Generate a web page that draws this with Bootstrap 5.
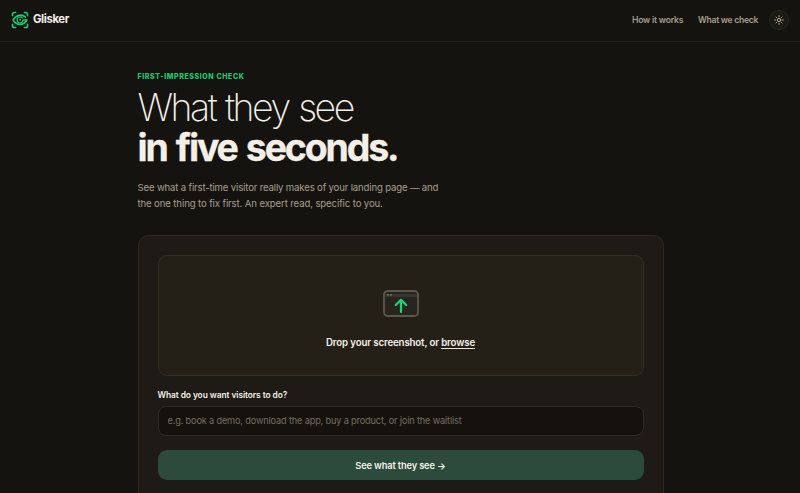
<!DOCTYPE html>
<html lang="en">
<head>
<meta charset="utf-8">
<meta name="viewport" content="width=device-width, initial-scale=1">
<title>Glisker</title>
<link href="https://cdn.jsdelivr.net/npm/bootstrap@5.3.0/dist/css/bootstrap.min.css" rel="stylesheet">
<style>
body{background:#15130f;color:#f4f0e8;font-family:Inter,"Liberation Sans",sans-serif;font-size:10px;height:493px;overflow:hidden}
.topbar{height:41.5px;border-bottom:1px solid #25221c;padding:0 11px 1px}
.brand-name{font-size:11.3px;font-weight:700;letter-spacing:-.38px;margin-left:4px}
.topbar .nav-link{color:#a89f90;font-size:8.6px;font-weight:600;line-height:14px;white-space:nowrap}
.link-how{width:51px;letter-spacing:-.22px;margin-right:15px}
.link-check{width:61px;letter-spacing:-.27px;margin-right:10px}
.theme-btn{width:20px;height:20px;border:1px solid #2b2822;background:#1b1914;color:#c5bcae}
.page{width:526px;height:451.5px;margin-left:137.5px;padding-top:29px}
.eyebrow{color:#1fca76;font-size:7px;font-weight:800;letter-spacing:.6px;line-height:12px}
.headline{font-size:37.5px;line-height:40px;margin:5.500px 0 0}
.headline .thin{font-weight:200;letter-spacing:-2.480px;word-spacing:1.500px}
.headline .bold{font-weight:700;letter-spacing:-2.180px;word-spacing:2.500px;-webkit-text-stroke:.3px currentColor}
.intro{color:#a89f90;font-size:9.6px;line-height:16px;margin:11.500px 0 0;white-space:nowrap}
.i1{letter-spacing:-.165px}
.i2{letter-spacing:-.12px}
.panel{height:258px;margin-top:23.5px;padding:19px 19px 0;border:1px solid #2a2821;border-bottom:0;border-radius:11px 11px 0 0;background:#1e1b16}
.dropzone{height:121px;border:1px solid #343024;border-radius:9px;background:#242017;padding-top:34px}
.drop-text{font-size:9.7px;font-weight:600;line-height:13px;margin-top:18.500px;letter-spacing:-.14px}
.browse{border-bottom:1px solid #e9e4da}
.goal-label{font-size:8.4px;font-weight:600;line-height:12px;margin:12.500px 0 5.500px;letter-spacing:-.07px}
.goal-input,.goal-input:focus{height:30px;background:#15120d;border:1px solid #302c25;border-radius:8px;color:#f4f0e8;font-size:9.2px;letter-spacing:-.16px;padding:0 9px 1px}
.goal-input::placeholder{color:#766e61}
.submit,.submit:hover{height:30px;margin-top:14px;border:0;border-radius:9px;background:#2d4b3c;color:#f4f0e8;font-size:9.3px;font-weight:600;letter-spacing:-.15px;padding:1px 0 0}
</style>
</head>
<body>
<header class="topbar d-flex align-items-center justify-content-between">
  <a href="#" class="d-flex align-items-center text-decoration-none text-reset">
    <svg width="18" height="18" viewBox="0 0 18 18" fill="none" stroke="#1fca76" stroke-width="1.600" stroke-linecap="round" stroke-linejoin="round"><path d="M1.500 4.600V3.300Q1.500 1.500 3.300 1.500H4.600M13.400 1.500h1.300q1.800 0 1.800 1.800V4.600M1.500 13.400v1.300q0 1.800 1.800 1.800H4.600M13.400 16.500h1.300q1.800 0 1.800-1.800V13.400"/><path d="M14.500 6.200C11 2.800 5.500 3.500 2 9c3.500 5.800 10.500 6 14 0h-3.600"/><path d="M11.300 7A3 3 0 1 0 12 9.400" stroke-width="1.300"/><circle cx="9.100" cy="8.800" r="1" fill="#1fca76" stroke="none"/></svg>
    <span class="brand-name">Glisker</span>
  </a>
  <nav class="d-flex align-items-center">
    <a href="#" class="nav-link p-0 link-how">How it works</a>
    <a href="#" class="nav-link p-0 link-check">What we check</a>
    <button class="theme-btn rounded-circle p-0 d-flex align-items-center justify-content-center" aria-label="Toggle theme"><svg width="10" height="10" viewBox="0 0 10 10" fill="none" stroke="currentColor" stroke-width=".9" stroke-linecap="round"><circle cx="5" cy="5" r="1.700"/><path d="M5 .7v1M5 8.300v1M.7 5h1M8.300 5h1M2 2l.6.6M7.400 7.400l.6.6M2 8l.6-.6M7.400 2.600L8 2"/></svg></button>
  </nav>
</header>
<main class="page">
  <div class="eyebrow"><span>FIRST-IMPRESSION CHECK</span></div>
  <h1 class="headline"><span class="thin">What they see</span><br><span class="bold">in five seconds.</span></h1>
  <p class="intro"><span class="i1">See what a first-time visitor really makes of your landing page — and</span><br><span class="i2">the one thing to fix first. An expert read, specific to you.</span></p>
  <section class="panel">
    <div class="dropzone d-flex flex-column align-items-center">
      <svg width="36" height="27" viewBox="0 0 36 27" fill="none"><rect x="1" y="1" width="34" height="25" rx="3.500" fill="#28251e" stroke="#5d574c" stroke-width="1.800"/><path d="M2 4h32v3H2z" fill="#3a362d"/><path d="M4.500 4.800h1M7.500 4.800h1" stroke="#8a8172" stroke-width="1.200" stroke-linecap="round"/><path d="M18 22V10.200M12.800 15L18 9.800l5.200 5.200" stroke="#1fd47c" stroke-width="2.200" stroke-linecap="round" stroke-linejoin="round"/></svg>
      <div class="drop-text"><span>Drop your screenshot, or <span class="browse">browse</span></span></div>
    </div>
    <label class="goal-label d-block" for="goal"><span>What do you want visitors to do?</span></label>
    <input id="goal" class="goal-input form-control shadow-none" placeholder="e.g. book a demo, download the app, buy a product, or join the waitlist">
    <button class="submit btn w-100 d-flex align-items-center justify-content-center"><span>See what they see →</span></button>
  </section>
</main>
<script src="https://cdn.jsdelivr.net/npm/bootstrap@5.3.0/dist/js/bootstrap.bundle.min.js"></script>
</body>
</html>
